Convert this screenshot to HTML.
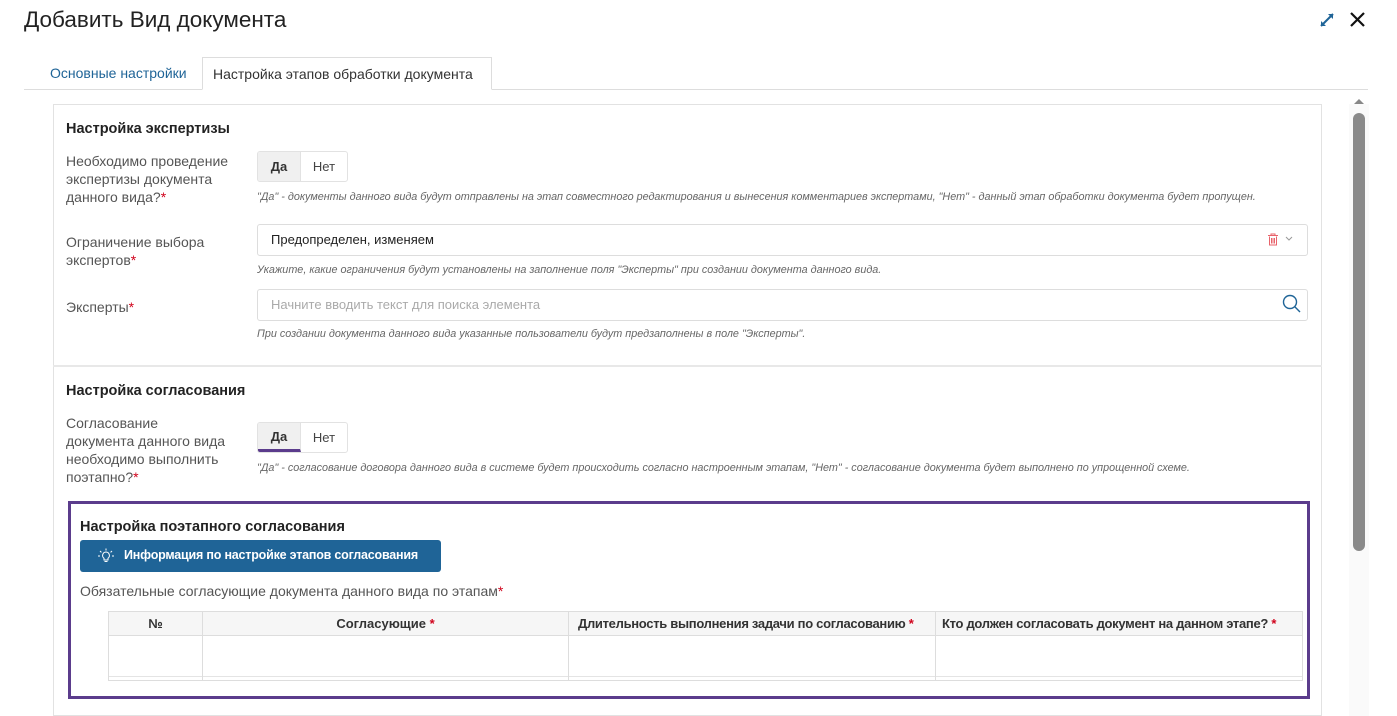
<!DOCTYPE html>
<html><head><meta charset="utf-8"><style>
*{box-sizing:border-box;margin:0;padding:0}
body{width:1397px;height:716px;overflow:hidden;background:#fff;font-family:"Liberation Sans","Noto Sans CJK SC",sans-serif;color:#333;position:relative}
.a{position:absolute;white-space:nowrap}
.lbl{font-size:14px;color:#555;line-height:18px}
.req{color:#d0021b}
.hint{font-size:10.8px;font-style:italic;color:#666}
.h{font-size:14.5px;font-weight:bold;color:#222}
.inp{border:1px solid #ddd;border-radius:3px;background:#fff}
.tg{border:1px solid #e2e2e2;border-radius:3px;display:flex;font-size:13px;height:31px;width:91px;overflow:hidden}
.tg div{display:flex;align-items:center;justify-content:center}
.th{font-size:13px;font-weight:bold;color:#333}
</style></head><body>
<div class="a" style="left:24px;top:7px;font-size:22.5px;color:#222">Добавить Вид документа</div>
<svg class="a" style="left:1318px;top:11px" width="18" height="18" viewBox="0 0 18 18"><path d="M3 15L15 3" stroke="#1f6497" stroke-width="2"/><path d="M10 3h5v5z M3 10v5h5z" fill="#1f6497"/></svg>
<svg class="a" style="left:1349px;top:11px" width="17" height="17" viewBox="0 0 17 17"><path d="M2 2L15 15M15 2L2 15" stroke="#111" stroke-width="2.2"/></svg>
<div class="a" style="left:24px;top:89px;width:1344px;height:1px;background:#ddd"></div>
<div class="a" style="left:50px;top:65px;font-size:14px;color:#1f6497">Основные настройки</div>
<div class="a" style="left:202px;top:57px;width:290px;height:33px;border:1px solid #ddd;border-bottom:1px solid #fff;background:#fff;font-size:14px;color:#333;padding:8px 0 0 10px">Настройка этапов обработки документа</div>

<div class="a" style="left:53px;top:104px;width:1269px;height:612px;border:1px solid #e2e2e2"></div>
<div class="a" style="left:53px;top:365px;width:1269px;height:2px;background:#e8e8e8"></div>

<div class="a h" style="left:66px;top:121px">Настройка экспертизы</div>
<div class="a lbl" style="left:66px;top:152px">Необходимо проведение<br>экспертизы документа<br>данного вида?<span class="req">*</span></div>
<div class="a tg" style="left:257px;top:151px"><div style="width:43px;background:#f0f0f0;font-weight:bold;border-right:1px solid #e2e2e2">Да</div><div style="flex:1;color:#444">Нет</div></div>
<div class="a hint" style="left:257px;top:191px">"Да" - документы данного вида будут отправлены на этап совместного редактирования и вынесения комментариев экспертами, "Нет" - данный этап обработки документа будет пропущен.</div>

<div class="a lbl" style="left:66px;top:233px">Ограничение выбора<br>экспертов<span class="req">*</span></div>
<div class="a inp" style="left:257px;top:224px;width:1051px;height:32px;font-size:13px;color:#222;padding:7px 0 0 13px">Предопределен, изменяем</div>
<svg class="a" style="left:1267px;top:233px" width="12" height="13" viewBox="0 0 12 13"><path d="M1 2.5h10M4 2.5V1h4v1.5M2.5 3.5v8.5h7V3.5M4.5 5v5.5M6 5v5.5M7.5 5v5.5" fill="none" stroke="#e8636b" stroke-width="1"/></svg>
<svg class="a" style="left:1285px;top:236px" width="8" height="6" viewBox="0 0 8 6"><path d="M1 1l3 3 3-3" fill="none" stroke="#999" stroke-width="1"/></svg>
<div class="a hint" style="left:257px;top:264px">Укажите, какие ограничения будут установлены на заполнение поля "Эксперты" при создании документа данного вида.</div>

<div class="a lbl" style="left:66px;top:298px">Эксперты<span class="req">*</span></div>
<div class="a inp" style="left:257px;top:289px;width:1051px;height:32px;font-size:13px;color:#aaa;padding:7px 0 0 13px">Начните вводить текст для поиска элемента</div>
<svg class="a" style="left:1282px;top:294px" width="20" height="20" viewBox="0 0 20 20"><circle cx="8" cy="8" r="6.5" fill="none" stroke="#1f6497" stroke-width="1.4"/><path d="M12.8 12.8L18 18" stroke="#1f6497" stroke-width="1.4"/></svg>
<div class="a hint" style="left:257px;top:328px">При создании документа данного вида указанные пользователи будут предзаполнены в поле "Эксперты".</div>

<div class="a h" style="left:66px;top:383px">Настройка согласования</div>
<div class="a lbl" style="left:66px;top:414px">Согласование<br>документа данного вида<br>необходимо выполнить<br>поэтапно?<span class="req">*</span></div>
<div class="a tg" style="left:257px;top:422px"><div style="width:43px;background:#f0f0f0;font-weight:bold;border-right:1px solid #e2e2e2;border-bottom:3px solid #5b3c8c">Да</div><div style="flex:1;color:#444">Нет</div></div>
<div class="a hint" style="left:257px;top:462px">"Да" - согласование договора данного вида в системе будет происходить согласно настроенным этапам, "Нет" - согласование документа будет выполнено по упрощенной схеме.</div>

<div class="a" style="left:68px;top:501px;width:1242px;height:198px;border:3px solid #5b3c8c"></div>
<div class="a h" style="left:80px;top:519px">Настройка поэтапного согласования</div>
<div class="a" style="left:80px;top:540px;width:361px;height:32px;background:#1f6497;border-radius:3px;color:#fff;font-size:12.5px;font-weight:bold;letter-spacing:-0.2px;padding:8px 0 0 44px">Информация по настройке этапов согласования</div>
<svg class="a" style="left:97px;top:548px" width="18" height="16" viewBox="0 0 18 16"><path d="M9 4a3.5 3.5 0 0 0-2 6.3V12h4v-1.7A3.5 3.5 0 0 0 9 4zM7.5 13.5h3" fill="none" stroke="#fff" stroke-width="1"/><path d="M9 0.5v2M3 3l1.4 1.4M15 3l-1.4 1.4M1 8h2M15 8h2" stroke="#fff" stroke-width="1"/></svg>
<div class="a" style="left:80px;top:583px;font-size:14px;color:#555">Обязательные согласующие документа данного вида по этапам<span class="req">*</span></div>

<div class="a" style="left:108px;top:611px;width:1195px;height:70px;border:1px solid #ddd"></div>
<div class="a" style="left:109px;top:612px;width:1193px;height:24px;background:#f6f6f6;border-bottom:1px solid #ddd"></div>
<div class="a" style="left:109px;top:676px;width:1193px;height:1px;background:#e4e4e4"></div>
<div class="a" style="left:202px;top:612px;width:1px;height:69px;background:#ddd"></div>
<div class="a" style="left:568px;top:612px;width:1px;height:69px;background:#ddd"></div>
<div class="a" style="left:935px;top:612px;width:1px;height:69px;background:#ddd"></div>
<div class="a th" style="left:109px;top:616px;width:93px;text-align:center">№</div>
<div class="a th" style="left:203px;top:616px;width:365px;text-align:center">Согласующие <span class="req">*</span></div>
<div class="a th" style="left:578px;top:616px;letter-spacing:-0.3px">Длительность выполнения задачи по согласованию <span class="req">*</span></div>
<div class="a th" style="left:942px;top:616px;letter-spacing:-0.3px">Кто должен согласовать документ на данном этапе? <span class="req">*</span></div>

<div class="a" style="left:1349px;top:104px;width:20px;height:612px;background:#fafafa"></div>
<svg class="a" style="left:1352px;top:97px" width="14" height="8" viewBox="0 0 14 8"><path d="M2 7l5-5 5 5z" fill="#888"/></svg>
<div class="a" style="left:1353px;top:113px;width:12px;height:438px;background:#8a8a8a;border-radius:6px"></div>
</body></html>
